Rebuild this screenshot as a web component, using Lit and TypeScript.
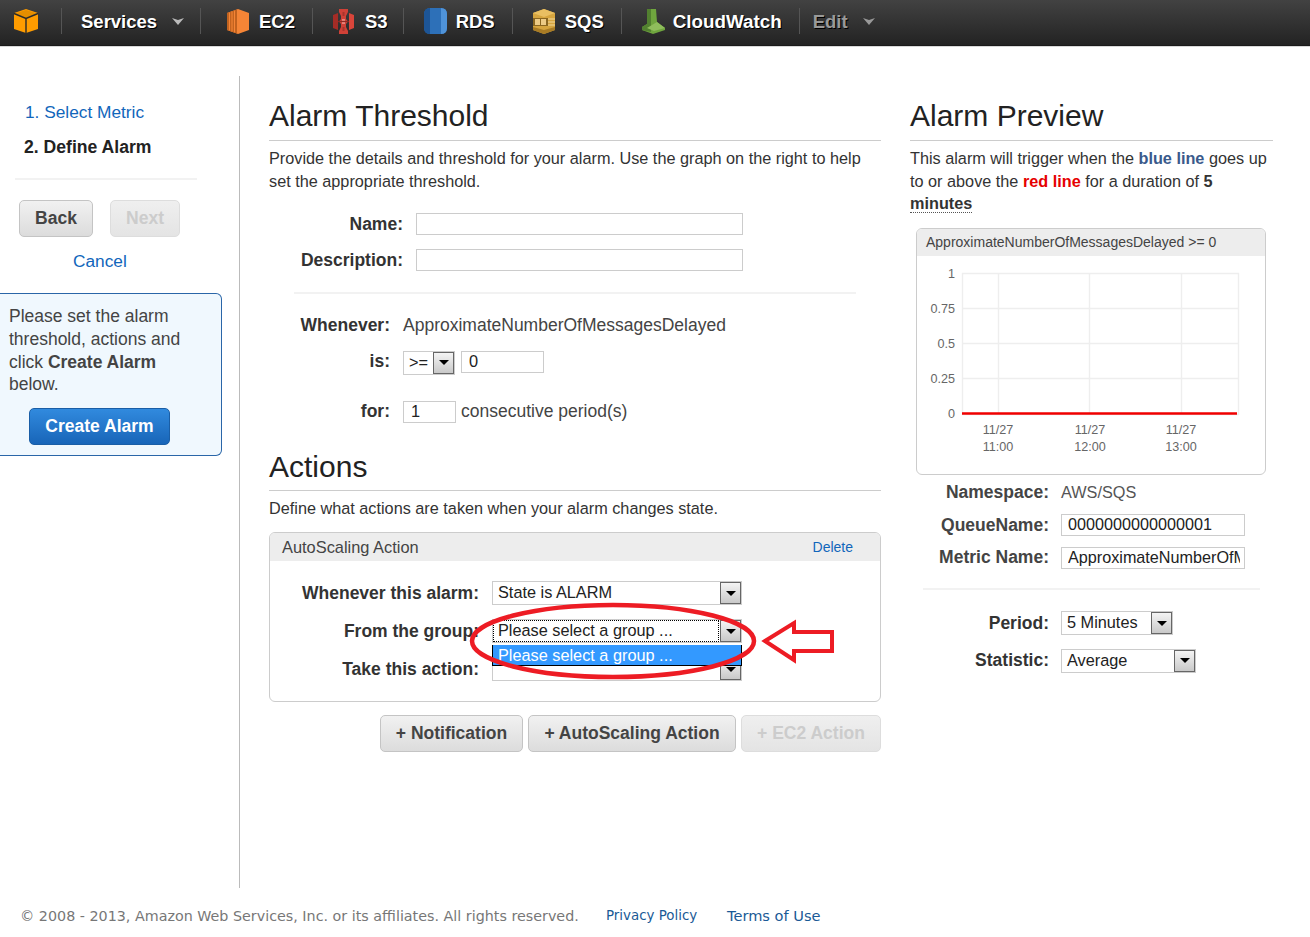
import { LitElement, html, css, svg } from "lit";
import { customElement } from "lit/decorators.js";

@customElement("app-select")
class AppSelect extends LitElement {
  static properties = { w: { type: Number }, label: {}, focus: { type: Boolean } };
  w = 100;
  label = "";
  focus = false;
  static styles = css`
    :host { display: inline-block; vertical-align: top; }
    .s { display: flex; box-sizing: border-box; height: 24px; border: 1px solid #ccc; background: #fff; font: 16.3px "Liberation Sans", sans-serif; color: #222; }
    .t { flex: 1; padding-left: 5px; line-height: 21px; white-space: nowrap; overflow: hidden; }
    .t.f { outline: 1px dotted #000; outline-offset: -1px; margin-right: 1px; }
    .arr { width: 21px; box-sizing: border-box; border: 1px solid #666; background: linear-gradient(#f4f4f4, #c9c9c9); display: flex; align-items: center; justify-content: center; }
    .arr i { width: 0; height: 0; border: 5px solid transparent; border-top: 5px solid #000; border-bottom: 0; }
  `;
  render() {
    return html`<div class="s" style="width:${this.w}px"><span class="t ${this.focus ? "f" : ""}">${this.label}</span><span class="arr"><i></i></span></div>`;
  }
}

const cube = svg`<svg width="26" height="26" viewBox="0 0 26 26"><path d="M13 1 25 5v16l-12 4L1 21V5z" fill="#ff9c00"/><path d="M2 5.5 13 2l11 3.5-11 4.5z" fill="#e58e00"/><path d="M13 10.5V25M1 5.5l12 5 12-5" fill="none" stroke="#2a2a2a" stroke-width="1.4"/></svg>`;
const ec2 = svg`<svg width="22" height="25" viewBox="0 0 22 25"><path d="M11 0 22 4v17l-11 4L0 21V4z" fill="#f58536"/><path d="M10 .4V24.6L0 21V4z" fill="#c0621f"/><path d="M2.5 3.5v18M5 2.6v19.8M7.5 1.7v21.6" stroke="#f58536" stroke-width="1.1"/></svg>`;
const s3 = svg`<svg width="21" height="25" viewBox="0 0 21 25"><path d="M0 6l5-2v17l-5-2z" fill="#a52c26"/><path d="M21 6l-5-2v17l5-2z" fill="#d9453a"/><path d="M6 0h9v3l-2 4v3l2 2.5L13 15v3l2 4v3H6v-3l2-4v-3l-2-2.5L8 10V7L6 3z" fill="#cf4137"/><path d="M9 10h3v5H9z" fill="#e8837a"/><path d="M5 12.5h11" stroke="#8e2a24" stroke-width="1.2"/><path d="M9.5 3h2v4h-2zM9.5 18h2v4h-2z" fill="#a8342c"/></svg>`;
const rds = svg`<svg width="23" height="26" viewBox="0 0 23 26"><rect x="0" y="0" width="23" height="26" rx="6" fill="#2d70b8"/><path d="M6 0v26Q0 26 0 20V6Q0 0 6 0z" fill="#1d5596"/><path d="M17 0v26q6 0 6-6V6q0-6-6-6z" fill="#4f93d9"/></svg>`;
const sqs = svg`<svg width="22" height="25" viewBox="0 0 22 25"><path d="M11 0 22 4v17l-11 4L0 21V4z" fill="#d6a53f"/><path d="M0 4l11-4 11 4-11 4z" fill="#e9bf62"/><path d="M0 21l11 4 11-4v-3l-11 3-11-3z" fill="#a87b25"/><path d="M0 9h15v8H0z" fill="#8a6620"/><path d="M2 10h5v6H2zM8 10h5v6H8z" fill="#ecca85"/><path d="M15 10h7M15 13h7M15 16h7" stroke="#f2d79a" stroke-width="1.2"/></svg>`;
const cw = svg`<svg width="23" height="25" viewBox="0 0 23 25"><path d="M5 0h9l1 13 8 6v2l-12 4-11-4v-3l5-3z" fill="#6fa53e"/><path d="M5 0h4v23l-9-2v-3l5-3z" fill="#528030"/><path d="M15 13l8 6-11 3-7-3z" fill="#8fbd5c"/></svg>`;
const chev = svg`<svg width="12" height="8" viewBox="0 0 12 8"><path d="M0 1l6 2 6-2-6 7z" fill="currentColor"/></svg>`;

const services = [
  ["EC2", ec2, "first"], ["S3", s3, "s3"], ["RDS", rds, ""], ["SQS", sqs, ""], ["CloudWatch", cw, "cw"],
] as const;

@customElement("app-root")
class AppRoot extends LitElement {
  static styles = css`
    :host { display: block; width: 1310px; height: 937px; overflow: hidden; position: relative; background: #fff; font: 16.25px/23px "Liberation Sans", Arial, sans-serif; color: #444; }
    * { box-sizing: border-box; }
    a { color: #1166bb; text-decoration: none; }

    .top { height: 47px; display: flex; align-items: flex-start; padding: 8px 0 0 13px; background: linear-gradient(#424242, #222); border-bottom: 1px solid #d8d8d8; box-shadow: inset 0 -1px 0 #1a1a1a; }
    .logo { width: 26px; height: 26px; display: flex; margin-right: 22px; }
    .item { display: flex; align-items: center; height: 26px; border-left: 1px solid #555; font-weight: bold; font-size: 18.5px; color: #fff; text-shadow: 1px 1px 0 #000; white-space: nowrap; }
    .ico { width: 32px; display: flex; flex: none; }
    .svc { padding-left: 19px; width: 139px; }
    .caret { display: flex; margin-left: 15px; color: #bbb; }
    .item.ic { padding: 0 17px 0 20px; }
    .item.ic.first { padding-left: 26px; }
    .item.ic.s3 { padding-right: 15px; }
    .item.ic.cw { font-size: 18.8px; }
    .cw .ico { width: 31px; }
    .item.edit { color: #999; padding-left: 13px; }
    .edit .caret { color: #999; }

    .body { display: grid; grid-template-columns: 240px 612px 363px; column-gap: 29px; margin-top: 29px; height: 812px; }
    .side { border-right: 1px solid #bbb; padding-top: 26px; }
    .steps { padding-left: 25px; height: 104px; }
    .steps a { display: block; height: 35px; line-height: 20px; font-size: 17.3px; }
    .steps b { display: block; margin-left: -1px; color: #222; line-height: 20px; font-size: 17.6px; }
    .rule { height: 2px; background: #f2f2f2; }
    .side .rule { width: 182px; margin-left: 15px; margin-top: -28px; }
    .btns { display: flex; gap: 17px; padding: 20px 0 0 19px; }
    .btn { display: inline-flex; align-items: center; justify-content: center; height: 37px; border: 1px solid #c4c4c4; border-radius: 5px; background: linear-gradient(#f1f1f1, #dcdcdc); font-weight: bold; font-size: 17.5px; color: #444; white-space: nowrap; }
    .btn.off { color: #ccc; background: linear-gradient(#efefef, #e4e4e4); border-color: #ddd; }
    .w-back { width: 74px; } .w-next { width: 70px; } .w-not { width: 143px; } .w-as { width: 208px; } .w-ec2 { width: 140px; }
    .cancel { display: block; margin: 14px 0 0 73px; font-size: 17.3px; line-height: 20px; }
    .help { width: 222px; height: 163px; margin-top: 22px; border: 1px solid #2a66a8; border-left: 0; border-radius: 0 6px 6px 0; background: #f0f8fe; padding: 11px 0 0 9px; font-size: 17.5px; line-height: 22.8px; }
    .help p { margin: 0; width: 190px; }
    .create { display: flex; align-items: center; justify-content: center; width: 141px; height: 37px; margin: 12px 0 0 20px; border: 1px solid #1a5ea6; border-radius: 5px; background: linear-gradient(#318ade, #1865b8); color: #fff; font-weight: bold; font-size: 17.5px; }

    h2 { margin: 0; font-weight: normal; font-size: 30px; line-height: 36px; color: #222; border-bottom: 1px solid #ccc; padding: 22px 0 6px; }
    h2.act { padding: 1px 0 5px; }
    .p { margin-top: 6px; color: #333; }
    .fld { display: grid; grid-template-columns: 134px 327px; column-gap: 13px; align-items: center; height: 36px; }
    .flds { margin-top: 13px; }
    .lab { font-weight: bold; font-size: 17.5px; text-align: right; color: #333; white-space: nowrap; }
    .inp { display: block; height: 22px; border: 1px solid #ccc; background: #fff; color: #222; line-height: 19px; padding-left: 7px; white-space: nowrap; overflow: hidden; }
    .w-0 { width: 83px; } .w-1 { width: 53px; } .w-q { width: 184px; padding-left: 6px; }
    .clip { display: block; width: 172px; overflow: hidden; }
    .mid .rule { margin: 14px 25px 0 25px; }
    .cond { display: grid; grid-template-columns: 121px auto; column-gap: 13px; align-items: center; justify-content: start; height: 22px; font-size: 17.5px; }
    .c1 { margin-top: 20px; } .c2 { margin-top: 14px; } .c3 { margin-top: 28px; }
    .cond .inp { font-size: 16.4px; }
    .v { display: flex; gap: 6px; align-items: center; height: 22px; }
    .v.tight { gap: 5px; }
    .v.start { align-items: flex-start; }
    .actions { margin-top: 26px; }
    .box { margin-top: 12px; border: 1px solid #ccc; border-radius: 6px; height: 170px; position: relative; }
    .bh { height: 28px; background: #ededed; border-radius: 5px 5px 0 0; display: flex; align-items: center; justify-content: space-between; padding: 0 27px 0 12px; font-size: 16.4px; }
    .del { font-size: 14px; }
    .rows { padding-top: 13px; }
    .row { display: grid; grid-template-columns: 209px auto; column-gap: 13px; align-items: center; justify-content: start; height: 38px; }
    .dropdown { position: absolute; left: 222px; top: 112px; width: 250px; height: 21px; background: #3399ff; color: #fff; border: 1px solid #000; border-top: 0; line-height: 20px; padding-left: 5px; font-size: 16.3px; }
    .overlay { position: absolute; left: 0; top: 0; pointer-events: none; }
    .adds { display: flex; justify-content: flex-end; gap: 5px; margin-top: 13px; }

    .small { margin-top: 6px; color: #333; line-height: 22.5px; }
    .blue { color: #3a5a8c; }
    .red { color: #e60000; }
    .u { border-bottom: 1px dotted #555; }
    .chart { width: 350px; height: 247px; margin: 13px 0 0 6px; border: 1px solid #ccc; border-radius: 6px; overflow: hidden; }
    .ch { height: 27px; background: #ededed; font-size: 14px; line-height: 26px; padding-left: 9px; color: #444; white-space: nowrap; }
    .chart svg { display: block; }
    .chart text { font: 12.6px "Liberation Sans", sans-serif; fill: #666; }
    .kv { display: grid; grid-template-columns: 139px auto; column-gap: 12px; align-items: center; justify-content: start; height: 33px; }
    .kv.last { height: 32px; }
    .val { color: #555; }
    .kv .lab { color: #444; }
    .kvs { margin-top: 1px; }
    .kvs .inp { font-size: 16.2px; }
    .right .rule { margin: 14px 13px 0 13px; width: 337px; }
    .per { margin-top: 15px; }
    .per .kv { height: 37.5px; }
    .right .per .lab { color: #333; }

    .foot { position: absolute; left: 20px; top: 906px; display: flex; font: 14.3px/20px "DejaVu Sans", sans-serif; color: #777; white-space: nowrap; }
    .foot a { color: #1a5a96; }
    .pp { position: absolute; left: 586px; font-size: 13.4px; }
    .tu { position: absolute; left: 707px; font-size: 14.6px; }
  `;

  render() {
    return html`
      <div class="top">
        <span class="logo">${cube}</span>
        <span class="item svc">Services<span class="caret">${chev}</span></span>
        ${services.map(([n, ic, c]) => html`<span class="item ic ${c}"><span class="ico">${ic}</span>${n}</span>`)}
        <span class="item edit">Edit<span class="caret">${chev}</span></span>
      </div>
      <div class="body">
        <aside class="side">
          <div class="steps"><a href="#">1. Select Metric</a><b>2. Define Alarm</b></div>
          <div class="rule"></div>
          <div class="btns"><span class="btn w-back">Back</span><span class="btn off w-next">Next</span></div>
          <a class="cancel" href="#">Cancel</a>
          <div class="help"><p>Please set the alarm threshold, actions and click <b>Create Alarm</b> below.</p>
            <span class="create">Create Alarm</span>
          </div>
        </aside>
        <section class="mid">
          <h2>Alarm Threshold</h2>
          <div class="p">Provide the details and threshold for your alarm. Use the graph on the right to help set the appropriate threshold.</div>
          <div class="flds">
            <div class="fld"><span class="lab">Name:</span><span class="inp"></span></div>
            <div class="fld"><span class="lab">Description:</span><span class="inp"></span></div>
          </div>
          <div class="rule"></div>
          <div class="cond c1"><span class="lab">Whenever:</span><span>ApproximateNumberOfMessagesDelayed</span></div>
          <div class="cond c2"><span class="lab">is:</span><span class="v start"><app-select .w=${52} label=">="></app-select><span class="inp w-0">0</span></span></div>
          <div class="cond c3"><span class="lab">for:</span><span class="v tight"><span class="inp w-1">1</span>consecutive period(s)</span></div>
          <div class="actions">
            <h2 class="act">Actions</h2>
            <div class="p">Define what actions are taken when your alarm changes state.</div>
            <div class="box">
              <div class="bh"><span>AutoScaling Action</span><a class="del" href="#">Delete</a></div>
              <div class="rows">
                <div class="row"><span class="lab">Whenever this alarm:</span><app-select .w=${250} label="State is ALARM"></app-select></div>
                <div class="row"><span class="lab">From the group:</span><app-select .w=${250} .focus=${true} label="Please select a group ..."></app-select></div>
                <div class="row"><span class="lab">Take this action:</span><app-select .w=${250} label=""></app-select></div>
              </div>
              <div class="dropdown">Please select a group ...</div>
            </div>
            <div class="adds"><span class="btn w-not">+ Notification</span><span class="btn w-as">+ AutoScaling Action</span><span class="btn off w-ec2">+ EC2 Action</span></div>
          </div>
        </section>
        <section class="right">
          <h2>Alarm Preview</h2>
          <div class="small">This alarm will trigger when the <b class="blue">blue line</b> goes up to or above the <b class="red">red line</b> for a duration of <b>5</b> <b class="u">minutes</b></div>
          <div class="chart">
            <div class="ch">ApproximateNumberOfMessagesDelayed &gt;= 0</div>
            <svg width="350" height="218" viewBox="0 0 350 218">
              <path fill="none" stroke="#eee" stroke-width="1.4" d="M45.5 17.5h276v141h-276zM45.5 52.5h276M45.5 87.5h276M45.5 122.5h276M81.5 17.5v141M172.5 17.5v141M264.5 17.5v141"/>
              <path d="M45 157.5h275" stroke="#f00000" stroke-width="2.6"/>
              <g text-anchor="end">
                <text x="38" y="22">1</text><text x="38" y="57">0.75</text><text x="38" y="92">0.5</text><text x="38" y="127">0.25</text><text x="38" y="162">0</text>
              </g>
              <g text-anchor="middle">
                <text x="81" y="178">11/27</text><text x="81" y="195">11:00</text>
                <text x="173" y="178">11/27</text><text x="173" y="195">12:00</text>
                <text x="264" y="178">11/27</text><text x="264" y="195">13:00</text>
              </g>
            </svg>
          </div>
          <div class="kvs">
            <div class="kv"><span class="lab">Namespace:</span><span class="val">AWS/SQS</span></div>
            <div class="kv"><span class="lab">QueueName:</span><span class="inp w-q">0000000000000001</span></div>
            <div class="kv last"><span class="lab">Metric Name:</span><span class="inp w-q"><span class="clip">ApproximateNumberOfMessagesDelayed</span></span></div>
          </div>
          <div class="rule"></div>
          <div class="per">
            <div class="kv"><span class="lab">Period:</span><app-select .w=${112} label="5 Minutes"></app-select></div>
            <div class="kv"><span class="lab">Statistic:</span><app-select .w=${135} label="Average"></app-select></div>
          </div>
        </section>
      </div>
      <div class="foot"><span>© 2008 - 2013, Amazon Web Services, Inc. or its affiliates. All rights reserved.</span><a class="pp" href="#">Privacy Policy</a><a class="tu" href="#">Terms of Use</a></div>
      <svg class="overlay" width="1310" height="937" viewBox="0 0 1310 937">
        <ellipse cx="613" cy="641" rx="141" ry="36" fill="none" stroke="#ed1c24" stroke-width="4.5"/>
        <path d="M765 641 L794 623 V632 H832 V651 H794 V660 Z" fill="#fff" stroke="#ed1c24" stroke-width="4"/>
      </svg>
    `;
  }
}
